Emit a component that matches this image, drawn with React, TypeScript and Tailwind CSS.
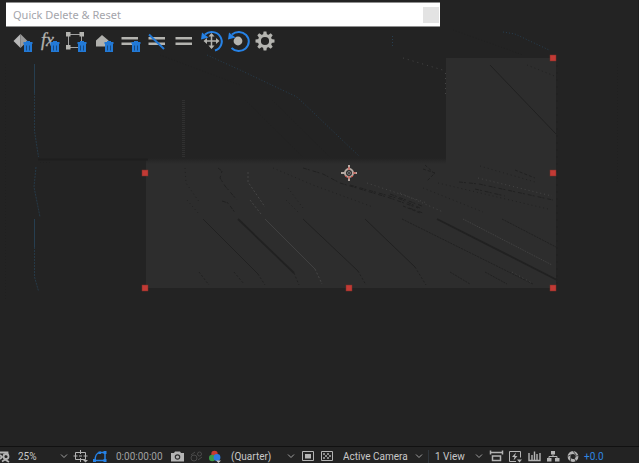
import type { ReactNode } from "react";
import clsx from "clsx";

type IconProps = {
  children: ReactNode;
};

function Trash() {
  return (
    <g>
      <path d="M15.500 14h9v2h-9zM18 13h4v1h-4zM16 16h8v8h-8z" fill="#2279d6" />
      <path d="M18.500 17.500v5M21.500 17.500v5" stroke="#174a82" />
    </g>
  );
}

function Bars() {
  return <path d="M5.500 9H22v2.600H5.500zM5.500 14.400H22V17H5.500z" fill="#b4b4b0" />;
}

const gearTeeth = [0, 45, 90, 135, 180, 225, 270, 315];

const tools: { label: string; icon: ReactNode }[] = [
  {
    label: "Delete keyframes",
    icon: (
      <>
        <path d="M12.500 6l-7 7 7 7z" fill="#b8b8b8" />
        <path d="M12.500 6l7 7-7 7z" fill="#9a9a9a" />
        <Trash />
      </>
    ),
  },
  {
    label: "Delete expressions",
    icon: (
      <>
        <text x="6" y="18" fill="#b4b4b0" stroke="#b4b4b0" strokeWidth=".3" fontSize="18" fontStyle="italic" fontFamily="Liberation Serif, serif">
          fx
        </text>
        <Trash />
      </>
    ),
  },
  {
    label: "Delete masks",
    icon: (
      <>
        <path d="M6.500 6.500h13v13h-13z" fill="none" stroke="#a0a0a0" />
        <path d="M4 4h4.500v4.500H4zM17.500 4H22v4.500h-4.500zM4 17h4.500v4.500H4z" fill="#b4b4b0" />
        <Trash />
      </>
    ),
  },
  {
    label: "Delete markers",
    icon: (
      <>
        <path d="M13 7l6.500 5.500v6H7v-6z" fill="#b0b0ac" />
        <Trash />
      </>
    ),
  },
  {
    label: "Delete effects",
    icon: (
      <>
        <Bars />
        <Trash />
      </>
    ),
  },
  {
    label: "Disable effects",
    icon: (
      <>
        <Bars />
        <path d="M6 6.500L21 21" stroke="#2279d6" strokeWidth="2" />
      </>
    ),
  },
  { label: "Effects", icon: <Bars /> },
  {
    label: "Reset position",
    icon: (
      <>
        <path d="M14.500 6.500v13M8 13h13" stroke="#b4b4b0" strokeWidth="1.500" />
        <path d="M14.500 5l3 3.500h-6zM14.500 21l3-3.500h-6zM6.500 13l3.500-3v6zM22.500 13L19 10v6z" fill="#b4b4b0" />
        <path d="M8 6.500A10 9.500 0 1 1 18 22.500" fill="none" stroke="#2682e6" strokeWidth="2" />
        <path d="M4 11.500L5 4.500l6.500 5z" fill="#2682e6" />
      </>
    ),
  },
  {
    label: "Reset rotation",
    icon: (
      <>
        <circle cx="14" cy="13" r="4.400" fill="#b4b4b0" />
        <path d="M8 6.500A10 9.500 0 1 1 7.500 20" fill="none" stroke="#2682e6" strokeWidth="2" />
        <path d="M4 11.500L5 4.500l6.500 5z" fill="#2682e6" />
      </>
    ),
  },
  {
    label: "Settings",
    icon: (
      <>
        <circle cx="14" cy="13" r="5.600" fill="none" stroke="#b4b4b0" strokeWidth="3" />
        {gearTeeth.map((angle) => (
          <path key={angle} d="M12 7l.6-3.500h2.800L16 7z" fill="#b4b4b0" transform={`rotate(${angle} 14 13)`} />
        ))}
      </>
    ),
  },
];

function ToolPanel() {
  return (
    <section className="absolute top-0.5 left-1.5 w-[434px]">
      <header className="flex h-[25px] items-center justify-between border-y border-[#8e8e8e] bg-white pr-px pl-[7px]">
        <h1 className="text-[11px] leading-4 text-[#a4a5ab]">Quick Delete &amp; Reset</h1>
        <button type="button" aria-label="Close" className="size-4 bg-[#e3e3e3]" />
      </header>
      <div className="flex pt-px pl-0.5">
        {tools.map((tool) => (
          <button key={tool.label} type="button" aria-label={tool.label} className="h-[26px] w-[27px]">
            <svg width="27" height="26" viewBox="0 0 27 26">
              {tool.icon}
            </svg>
          </button>
        ))}
      </div>
    </section>
  );
}

const handles = [
  [553, 58],
  [145, 173],
  [553, 173],
  [145, 288],
  [349, 288],
  [553, 288],
];

function Composition() {
  return (
    <svg className="block h-[446px] w-full min-w-[639px]" role="img" aria-label="Composition view">
      <defs>
        <linearGradient id="edge" x1="0" y1="0" x2="0" y2="1">
          <stop offset="0" stopColor="#232323" />
          <stop offset="1" stopColor="#2d2d2d" />
        </linearGradient>
      </defs>

      <path d="M446 58h110v230H146V164h300z" fill="#2d2d2d" />
      <path d="M146 158h300v6H146z" fill="url(#edge)" />

      <g fill="none" stroke="#1e1e1e">
        <path d="M38 159.500h110" strokeWidth="2" />
        <path d="M40 162.500h12M5.500 64v236M617.500 64v120M160 55l80 30M245 100l58 57M272 100l58 57M453 30l70 25" strokeDasharray="1 2" opacity=".6" />
        <path d="M638.500 0v446" />
      </g>

      {/* motion streaks across the solid */}
      <g fill="none" stroke="#212121">
        <path d="M203 219l55 55M303 219l55 52M365 219l50 48M490 65l66 69" />
        <path d="M238 219l56 54M437 219l120 61" strokeWidth="1.800" />
        <path d="M258 274l7 11M294 273l5 12M358 271l8 14M415 267l11 18M199 272l10 13M234 272l10 12" strokeDasharray="2 2" />
        <path d="M303 168l20 6 17 9 50 15 28 10M350 185l50 14 20 9M390 194l32 12M459 182l20 2 74 16M218 168l4 3-2 7 5 8 12 14M222 201l6 2 8 11M409 208l14 5M475 189l30 7" strokeDasharray="4 1 2 3" />
        <path d="M273 168l40 17 60 22M423 188l60 24M185 168l1 15 14 20M187 200l12 14M288 188l15 20M286 200l14 14M480 166l55 16M438 183l110 26M527 65l30 12" strokeDasharray="1 3" />
        <path d="M402 219l131 65M502 219l54 28M450 272l20 12M485 272l22 12" strokeDasharray="2 1" />
        <path d="M423 169l12 4-8 8M403 206l17 7M515 170l20 8M425 165l10 9" strokeDasharray="3 2" />
        <path d="M557 65v220" strokeDasharray="2 5" />
      </g>

      <g fill="none" stroke="#454545">
        <path d="M265 219l50 50" opacity=".8" />
        <path d="M248 172v10l17 25M250 200l11 14M315 269l7 15" strokeDasharray="2 2" />
        <path d="M367 183l60 20M400 193l43 19M478 178l74 18M512 272l20 11" strokeDasharray="1 3" />
        <path d="M463 219l89 46" strokeDasharray="1 1" />
        <path d="M403 58l43 13M445.500 73v24" strokeDasharray="1 4" />
        <path d="M183.500 100v58" stroke="#303030" strokeWidth="3" strokeDasharray="1 1" />
      </g>

      <g fill="none" stroke="#263e50">
        <path d="M34.500 64v29M34.500 219v28" />
        <path d="M34.500 93v38l4 26M36 167l-2 20 6 30M34.500 247v30l4 14" strokeDasharray="2 1" opacity=".8" />
        <path d="M207 55l33 15 57 27 62 59M503 32l12 2 34 16M392.500 36v12" strokeDasharray="1 2" />
      </g>

      {handles.map(([x, y]) => (
        <rect key={`${x}-${y}`} x={x - 3} y={y - 3} width="6" height="6" fill="#c23a35" stroke="#7e3028" strokeWidth=".5" />
      ))}

      <g fill="none">
        <circle cx="349" cy="173" r="4" stroke="#b5aaa3" strokeWidth="2" />
        <circle cx="349" cy="173" r="1.500" stroke="#777777" />
        <path d="M349 165v5M349 176v5M341 173h5M352 173h5" stroke="#b5aaa3" strokeWidth="2" />
        <path d="M349 167v3M349 176v3M353 173h3M345 176l2 1M351 177l2-1" stroke="#cf4038" />
      </g>
    </svg>
  );
}

function Icon({ children }: IconProps) {
  return (
    <svg width="16" height="14" viewBox="0 0 16 14" fill="none" stroke="#b4b4b4">
      {children}
    </svg>
  );
}

function IconButton({ label, children }: { label: string; children: ReactNode }) {
  return (
    <button type="button" aria-label={label} className="h-[13px] w-4 shrink-0">
      <Icon>{children}</Icon>
    </button>
  );
}

function Picker({ label, value, className }: { label: string; value: string; className: string }) {
  return (
    <div className={clsx("relative flex shrink-0 items-center", className)}>
      <select aria-label={label} className="h-[13px] w-full appearance-none text-[10px] leading-[13px] outline-none">
        <option>{value}</option>
      </select>
      <svg className="pointer-events-none absolute right-0.5" width="8" height="5" viewBox="0 0 8 5" fill="none" stroke="#a0a0a0">
        <path d="M1 .5l3 3 3-3" />
      </svg>
    </div>
  );
}

function ViewerBar() {
  return (
    <footer className="flex h-[17px] items-center border-t border-[#111111] bg-[#232323] pt-[3px] font-[Roboto,sans-serif] text-[#c8c8c8]">
      <button type="button" aria-label="3D glasses" className="h-[13px] w-2.5 shrink-0">
        <svg width="10" height="13" viewBox="0 0 10 13" fill="none" stroke="#b4b4b4" strokeWidth="1.800">
          <path d="M0 2.500h7.500v3" />
          <circle cx="6" cy="6.500" r="2.500" />
          <path d="M0 5l2 2-2 2M2 11.500l3-2 4 2.500" />
        </svg>
      </button>
      <Picker label="Magnification" value="25%" className="ml-2 w-[52px]" />

      <div className="ml-[3px] flex gap-[3px]">
        <IconButton label="Grid and guides">
          <path d="M2.500 2.500h10v7h-10zM7.500 0v4M7.500 8v4M0.500 6h4M10.500 6h4M6 6h3" />
          <path d="M10 10h5l-2.500 2.500z" fill="#b4b4b4" stroke="none" />
        </IconButton>
        <IconButton label="Mask visibility">
          <path d="M3 10.500C3 6 5 2.500 8 2.500h5v8z" stroke="#2682e6" strokeWidth="1.500" />
          <path d="M1 9h3v3H1zM11.500 9h3v3h-3zM11.500 1h3v3h-3zM6.500 1.500H9V4H6.500z" fill="#2682e6" stroke="none" />
        </IconButton>
      </div>

      <button type="button" className="ml-2 w-[53px] shrink-0 text-left text-[10px] leading-[13px] text-[#a0a0a0]">
        0:00:00:00
      </button>

      <div className="flex gap-[3px]">
        <IconButton label="Take snapshot">
          <path d="M2 3h3l1-1.500h5L12 3h3v8.500H2z" fill="#b4b4b4" stroke="none" />
          <circle cx="8.500" cy="7" r="2.200" stroke="#303030" strokeWidth="1.200" />
        </IconButton>
        <IconButton label="Show snapshot">
          <g stroke="#4a4a4a">
            <circle cx="6" cy="8" r="3" />
            <circle cx="11.500" cy="4" r="2" />
            <path d="M3 5l4-3M10 10l4-3" />
          </g>
        </IconButton>
        <IconButton label="Channels">
          <g stroke="none">
            <circle cx="7.500" cy="4" r="3.200" fill="#c93b32" />
            <circle cx="5.200" cy="8" r="3.200" fill="#3c9b48" />
            <circle cx="10" cy="7.500" r="3.400" fill="#2f7be0" />
            <path d="M9 10.500h5L11.500 13z" fill="#c4c4c4" />
          </g>
        </IconButton>
      </div>

      <Picker label="Resolution" value="(Quarter)" className="ml-2 w-[66px]" />

      <div className="ml-[3px] flex gap-[3px]">
        <IconButton label="Region of interest">
          <path d="M2.500 1.500h11v9h-11z" />
          <path d="M5 4h6v4.500H5z" fill="#b4b4b4" stroke="none" />
        </IconButton>
        <IconButton label="Transparency grid">
          <path d="M2.500 1.500h11v9h-11z" />
          <path d="M4 3h2v2H4zM8 3h2v2H8zM6 5h2v2H6zM10 5h2v2h-2zM4 7h2v2H4zM8 7h2v2H8z" fill="#8a8a8a" stroke="none" />
        </IconButton>
      </div>

      <Picker label="Camera" value="Active Camera" className="ml-2 w-[82px]" />
      <Picker label="View layout" value="1 View" className="ml-[3px] w-[57px] border-l border-[#30363c] pl-1.5" />

      <div className="ml-[3px] flex gap-[3px]">
        <IconButton label="Pixel aspect ratio">
          <path d="M2 2.500h13M4.500 6h8v4.500h-8z" strokeWidth="1.500" />
          <path d="M2.500 .5v4M14.500 .5v4" strokeWidth="1.500" />
        </IconButton>
        <IconButton label="Fast previews">
          <path d="M9 11.500H2.500v-10h11v6" />
          <path d="M9 2.500L5 7h2.500l-1 3.500 4-4.500H8z" fill="#b4b4b4" stroke="none" />
          <path d="M10 9.500h5l-2.500 3z" fill="#b4b4b4" stroke="none" />
        </IconButton>
        <IconButton label="Timeline">
          <path d="M3 3v7.500h11V3M6 5v5M8.500 1.500V10M11 4v6" strokeWidth="1.400" />
        </IconButton>
        <IconButton label="Flowchart">
          <path d="M6 1h4v3.500H6zM2 8h4.500v3.500H2zM10 8h4.500v3.500H10z" fill="#b4b4b4" stroke="none" />
          <path d="M8 4.500v2M4 8.500v-2h8v2" />
        </IconButton>
        <IconButton label="Reset exposure">
          <circle cx="9" cy="6.500" r="4" strokeWidth="2.800" />
          <path d="M9 1l3 4M14.500 5.500l-5 1M12 11.500l-2-4M6 12l1-5M3.500 6.500l4-2" stroke="#303030" strokeWidth=".8" />
        </IconButton>
      </div>

      <button type="button" className="ml-1 text-[10px] leading-[13px] text-[#2f86e0]">
        +0.0
      </button>
    </footer>
  );
}

export default function App() {
  return (
    <main className="flex min-h-screen flex-col bg-[#232323] font-['Noto_Sans','Open_Sans',sans-serif]">
      <div className="relative flex-1 overflow-hidden">
        <Composition />
        <ToolPanel />
      </div>
      <ViewerBar />
    </main>
  );
}
